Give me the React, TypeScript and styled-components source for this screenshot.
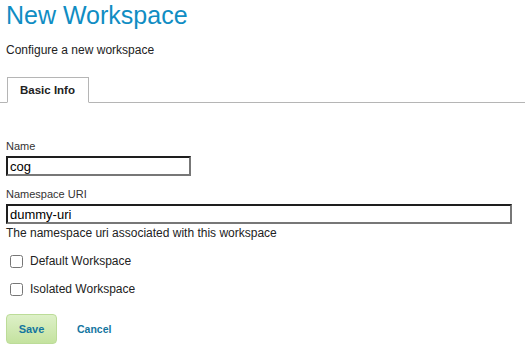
import React, { useState } from 'react'
import styled, { createGlobalStyle } from 'styled-components'

const GlobalStyle = createGlobalStyle`
    body {
        margin: 0;
        background: #fff;
        font-family: "Liberation Sans", Arial, sans-serif;
        color: #222;
    }
`

const Page = styled.div`
    padding: 0 0 0 6px;
`

const Title = styled.h1`
    margin: 0;
    padding-top: 1px;
    font-size: 25px;
    line-height: 29px;
    font-weight: normal;
    color: #108dc3;
`

const Subtitle = styled.p`
    margin: 13px 0 0;
    font-size: 12px;
    line-height: 14px;
    color: #222;
`

const TabBar = styled.ul`
    display: flex;
    list-style: none;
    margin: 20px 0 0 -6px;
    padding: 0 0 0 7px;
    border-bottom: 1px solid #b5b5b5;
`

const Tab = styled.li<{ $active?: boolean }>`
    margin-bottom: -1px;
    padding: 0 13px 0 12px;
    height: 24px;
    line-height: 24px;
    font-size: 11.5px;
    font-weight: bold;
    color: #222;
    border: 1px solid #b5b5b5;
    border-bottom-color: ${(p) => (p.$active ? '#fff' : '#b5b5b5')};
    background: #fff;
`

const Form = styled.form`
    padding-top: 37px;
`

const Field = styled.div`
    display: flex;
    flex-direction: column;
    align-items: flex-start;
    & + & {
        margin-top: 12px;
    }
`

const Label = styled.label`
    font-size: 11px;
    line-height: 13px;
    color: #333;
    margin-bottom: 3px;
`

const TextInput = styled.input<{ $width: number }>`
    box-sizing: border-box;
    width: ${(p) => p.$width}px;
    height: 20px;
    margin: 0;
    padding: 0 2px;
    font-family: "Liberation Sans", Arial, sans-serif;
    font-size: 13px;
    color: #000;
    background: #fff;
    border: 2px solid;
    border-color: #1e1e1e #777 #777 #1e1e1e;
    outline: none;
`

const Help = styled.div`
    margin-top: 2px;
    font-size: 12px;
    line-height: 14px;
    color: #222;
`

const Checks = styled.div`
    display: flex;
    flex-direction: column;
    gap: 12px;
    margin-top: 13px;
`

const CheckRow = styled.label`
    display: flex;
    align-items: center;
    gap: 4px;
    height: 16px;
    font-size: 12px;
    color: #222;
    input {
        margin: 0 3px 0 4px;
        width: 13px;
        height: 13px;
    }
`

const Buttons = styled.div`
    display: flex;
    align-items: center;
    gap: 20px;
    margin-top: 17px;
`

const SaveButton = styled.button`
    width: 51px;
    height: 30px;
    padding: 0;
    border: 1px solid #bcdc98;
    border-radius: 4px;
    background: linear-gradient(#ddf0c8, #c4e29f);
    font-family: "Liberation Sans", Arial, sans-serif;
    font-size: 11px;
    font-weight: bold;
    color: #14769f;
    cursor: pointer;
`

const CancelLink = styled.a`
    font-size: 10.5px;
    font-weight: bold;
    color: #14769f;
    text-decoration: none;
    cursor: pointer;
`

export default function App() {
    const [name, setName] = useState('cog')
    const [uri, setUri] = useState('dummy-uri')
    const [isDefault, setDefault] = useState(false)
    const [isolated, setIsolated] = useState(false)

    return (
        <Page>
            <GlobalStyle />
            <Title>New Workspace</Title>
            <Subtitle>Configure a new workspace</Subtitle>
            <TabBar>
                <Tab $active>Basic Info</Tab>
            </TabBar>
            <Form onSubmit={(e) => e.preventDefault()}>
                <Field>
                    <Label>Name</Label>
                    <TextInput $width={185} value={name} onChange={(e) => setName(e.target.value)} />
                </Field>
                <Field>
                    <Label>Namespace URI</Label>
                    <TextInput $width={506} value={uri} onChange={(e) => setUri(e.target.value)} />
                    <Help>The namespace uri associated with this workspace</Help>
                </Field>
                <Checks>
                    <CheckRow>
                        <input type="checkbox" checked={isDefault} onChange={(e) => setDefault(e.target.checked)} />
                        Default Workspace
                    </CheckRow>
                    <CheckRow>
                        <input type="checkbox" checked={isolated} onChange={(e) => setIsolated(e.target.checked)} />
                        Isolated Workspace
                    </CheckRow>
                </Checks>
                <Buttons>
                    <SaveButton type="submit">Save</SaveButton>
                    <CancelLink>Cancel</CancelLink>
                </Buttons>
            </Form>
        </Page>
    )
}
